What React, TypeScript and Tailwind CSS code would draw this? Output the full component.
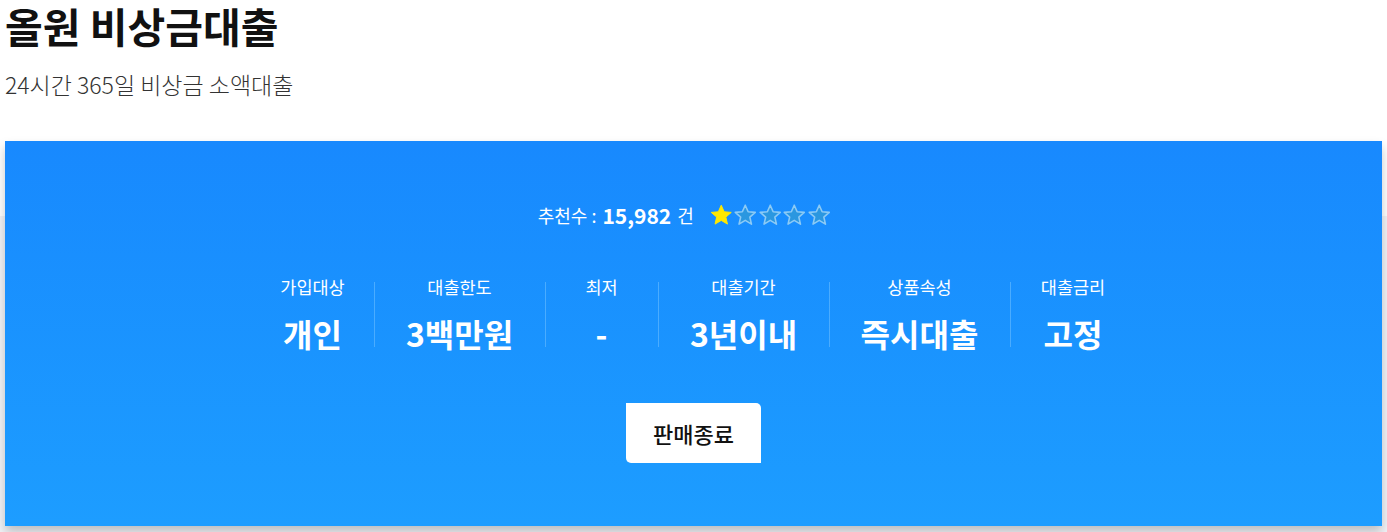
import React from 'react';

const font = { fontFamily: '"Noto Sans CJK KR", "Noto Sans", sans-serif' };

const specs = [
    { label: '가입대상', value: '개인', w: 'w-[122px]' },
    { label: '대출한도', value: '3백만원', w: 'w-[171px]' },
    { label: '최저', value: '-', w: 'w-[113px]' },
    { label: '대출기간', value: '3년이내', w: 'w-[171px]' },
    { label: '상품속성', value: '즉시대출', w: 'w-[181px]' },
    { label: '대출금리', value: '고정', w: 'w-[126px]' },
];

const Star = ({ filled }: { filled: boolean }) => (
    <svg width="24.5" height="24" viewBox="0 0 24 24">
        <path
            d="M12 2.2l2.9 6.6 7.1.6-5.4 4.7 1.6 7-6.2-3.7-6.2 3.7 1.6-7L2 9.4l7.1-.6z"
            fill={filled ? '#ffe800' : '#2b97e0'}
            stroke={filled ? '#ffe800' : '#8ccaf5'}
            strokeWidth={filled ? 1 : 1.6}
            strokeLinejoin="round"
        />
    </svg>
);

export default function App() {
    return (
        <div className="min-h-[532px] bg-[linear-gradient(to_bottom,#ffffff_216px,#f2f3f7_216px)]" style={font}>
            <div className="px-[5px] pt-[2px]">
                <h1 className="text-[41px] font-bold leading-[46px] text-[#111] whitespace-nowrap">올원 비상금대출</h1>
                <p className="mt-[21px] text-[23px] font-light leading-[30px] text-[#333] whitespace-nowrap">24시간 365일 비상금 소액대출</p>
            </div>

            <div className="mx-[5px] mt-[42px] h-[385px] bg-gradient-to-b from-[#1889fe] to-[#1d9dff] shadow-[0_6px_10px_rgba(0,0,0,0.22)] flex flex-col items-center text-white">
                <div className="mt-[61px] mr-[18px] flex items-center h-[26px]">
                    <span className="text-[18px] leading-none">추천수 : </span>
                    <span className="ml-[6px] text-[21px] font-bold leading-none">15,982</span>
                    <span className="ml-[6px] text-[18px] leading-none">건</span>
                    <div className="ml-[15px] flex">
                        <Star filled />
                        <Star filled={false} />
                        <Star filled={false} />
                        <Star filled={false} />
                        <Star filled={false} />
                    </div>
                </div>

                <div className="mt-[54px] flex">
                    {specs.map((s, i) => (
                        <div
                            key={s.label}
                            className={`${s.w} h-[65px] flex flex-col items-center ${i > 0 ? 'border-l border-[#4aacff]' : ''}`}
                        >
                            <div className="-mt-[5px] text-[17.5px] leading-[20px]">{s.label}</div>
                            <div className="mt-[18px] text-[32px] font-bold leading-[36px]">{s.value}</div>
                        </div>
                    ))}
                </div>

                <button className="mt-[56px] w-[135px] h-[60px] bg-white rounded-tr-[5px] rounded-bl-[5px] text-[22px] font-medium text-[#111]">
                    판매종료
                </button>
            </div>
        </div>
    );
}
